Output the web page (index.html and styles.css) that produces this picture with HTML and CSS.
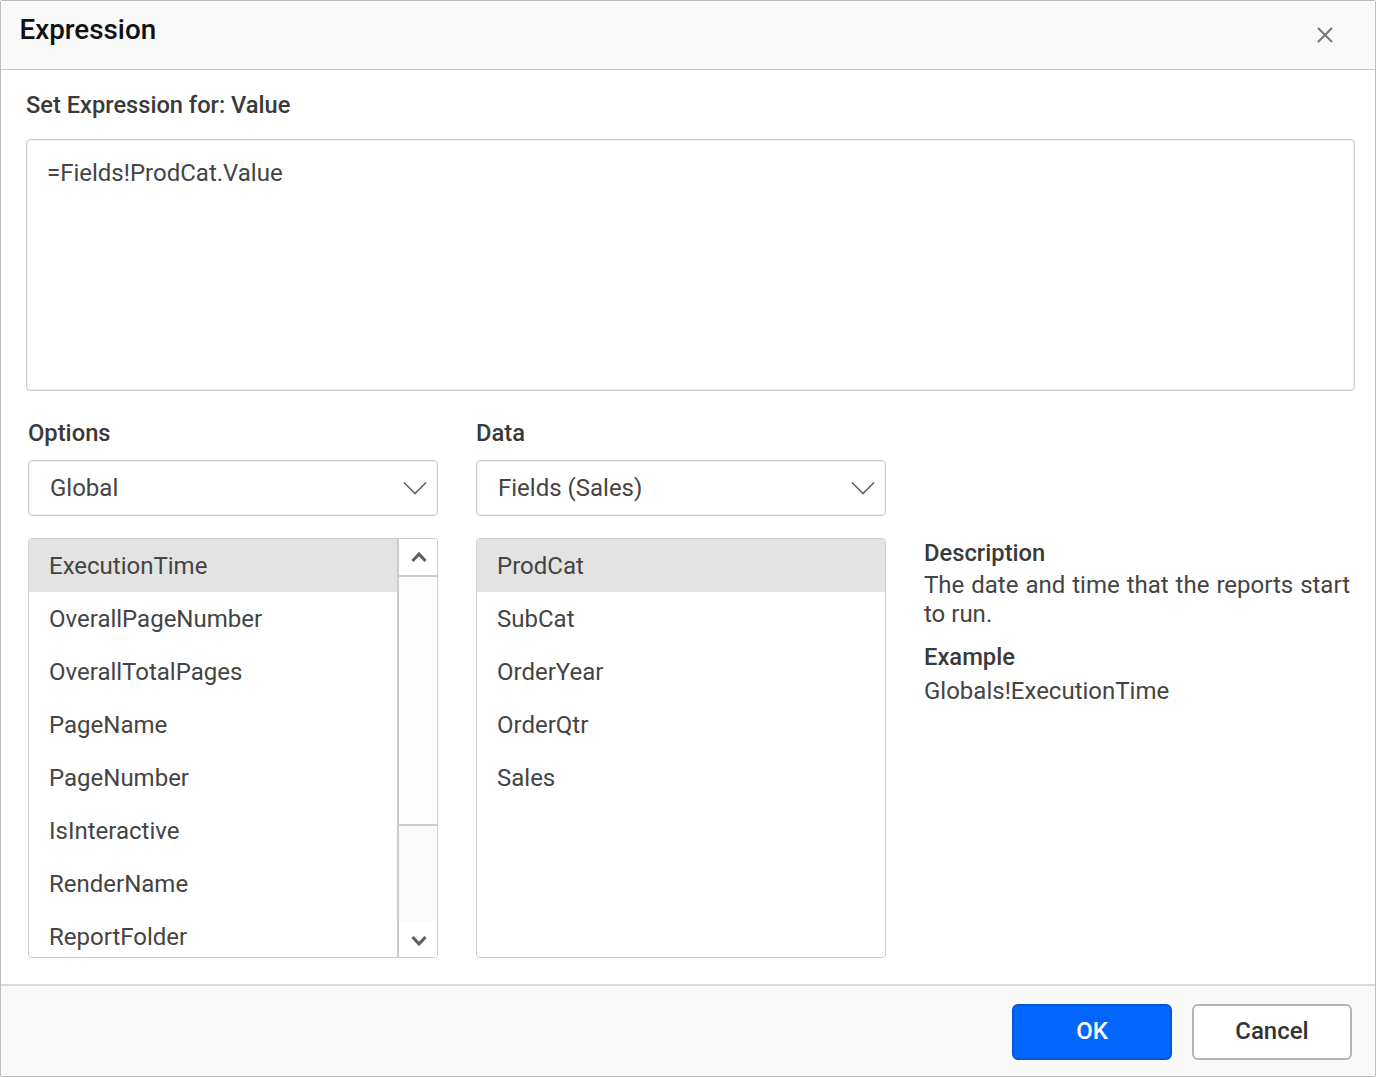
FILE: index.html
```html
<!DOCTYPE html>
<html lang="en">
<head>
<meta charset="utf-8">
<title>Expression</title>
<link rel="stylesheet" href="styles.css">
</head>
<body>
<div class="dialog">
  <header class="head">
    <h1 class="title">Expression</h1>
    <button class="close" aria-label="Close">
      <svg viewBox="0 0 16 16" width="16" height="16"><path d="M1 1L15 15M15 1L1 15" fill="none" stroke="#757575" stroke-width="2"/></svg>
    </button>
  </header>
  <main class="body">
    <div class="set-label">Set Expression for: Value</div>
    <div class="editor">=Fields!ProdCat.Value</div>
    <div class="columns">
      <section class="col">
        <div class="col-label">Options</div>
        <div class="select"><span>Global</span>
          <svg class="caret" viewBox="0 0 24 14" width="24" height="14"><path d="M1 1.5L12 12.5L23 1.5" fill="none" stroke="#666" stroke-width="1.7"/></svg>
        </div>
        <div class="list">
          <div class="items">
            <div class="item sel">ExecutionTime</div>
            <div class="item">OverallPageNumber</div>
            <div class="item">OverallTotalPages</div>
            <div class="item">PageName</div>
            <div class="item">PageNumber</div>
            <div class="item">IsInteractive</div>
            <div class="item">RenderName</div>
            <div class="item">ReportFolder</div>
          </div>
          <div class="scrollbar">
            <div class="sb-btn up"><svg viewBox="0 0 16 12" width="16" height="12"><path d="M1.5 10L8 3L14.500 10" fill="none" stroke="#616161" stroke-width="3.200"/></svg></div>
            <div class="sb-thumb"></div>
            <div class="sb-track"></div>
            <div class="sb-btn down"><svg viewBox="0 0 16 12" width="16" height="12"><path d="M1.5 2L8 9L14.500 2" fill="none" stroke="#616161" stroke-width="3.200"/></svg></div>
          </div>
        </div>
      </section>
      <section class="col">
        <div class="col-label">Data</div>
        <div class="select"><span>Fields (Sales)</span>
          <svg class="caret" viewBox="0 0 24 14" width="24" height="14"><path d="M1 1.5L12 12.5L23 1.5" fill="none" stroke="#666" stroke-width="1.7"/></svg>
        </div>
        <div class="list">
          <div class="items">
            <div class="item sel">ProdCat</div>
            <div class="item">SubCat</div>
            <div class="item">OrderYear</div>
            <div class="item">OrderQtr</div>
            <div class="item">Sales</div>
          </div>
        </div>
      </section>
      <section class="info">
        <div class="info-head">Description</div>
        <p class="info-text justified">The date and time that the reports start to run.</p>
        <div class="info-head second">Example</div>
        <p class="info-text example">Globals!ExecutionTime</p>
      </section>
    </div>
  </main>
  <footer class="foot">
    <button class="btn ok">OK</button>
    <button class="btn cancel">Cancel</button>
  </footer>
</div>
</body>
</html>
```
FILE: styles.css
```css
* { box-sizing: border-box; }
html, body { margin: 0; padding: 0; background: #fff; }
body { font-family: Roboto, "Liberation Sans", sans-serif; color: #333; }
.dialog {
  width: 1376px; height: 1077px;
  border: 1px solid #bdbdbd; border-radius: 2px;
  display: flex; flex-direction: column; background: #fff;
}
.head {
  height: 69px; flex: none;
  background: #f9f9f9; border-bottom: 1px solid #c6c6c6;
  display: flex; justify-content: space-between; align-items: flex-start;
  padding: 11px 42px 0 18.500px;
}
.title { margin: 0; font-size: 27.800px; font-weight: 500; line-height: 36px; color: #111; }
.close { border: 0; background: none; padding: 0; margin-top: 15px; width: 16px; height: 16px; display: block; }
.close svg { display: block; }
.body { flex: 1; padding: 20px 20px 0 25px; min-height: 0; }
.set-label { font-size: 23.650px; font-weight: 500; line-height: 30px; color: #3a3a3a; }
.editor {
  margin-top: 19px; width: 1329px; height: 252px;
  border: 1px solid #cccccc; border-radius: 4px; box-shadow: inset 0 0 0 1px #f0f0f0;
  padding: 18px 20px; font-size: 24px; line-height: 30px; color: #444;
}
.columns { display: flex; gap: 38px; margin-top: 27px; padding-left: 2px; }
.col { width: 410px; flex: none; }
.col-label { font-size: 23.750px; font-weight: 500; line-height: 30px; color: #3a3a3a; }
.select {
  margin-top: 12px; height: 56px; border: 1px solid #cccccc; border-radius: 4px; box-shadow: inset 0 0 0 1px #f0f0f0;
  display: flex; justify-content: space-between; align-items: center;
  padding: 0 10px 0 21px; font-size: 24px; color: #444;
}
.caret { display: block; }
.list {
  margin-top: 22px; height: 420px; border: 1px solid #cccccc; border-radius: 4px;
  display: flex; overflow: hidden;
}
.items { flex: 1; min-width: 0; overflow: hidden; }
.item { height: 53px; line-height: 55px; padding-left: 20px; font-size: 24px; color: #444; white-space: nowrap; }
.item.sel { background: #e3e3e3; }
.scrollbar { width: 40px; flex: none; border-left: 2px solid #cccccc; display: flex; flex-direction: column; background: #fff; }
.sb-btn { height: 36px; flex: none; display: flex; align-items: center; justify-content: center; padding-left: 1px; }
.sb-btn.up { height: 38px; border-bottom: 2px solid #cccccc; }
.sb-thumb { height: 249px; flex: none; background: #fdfdfd; border-bottom: 2px solid #cccccc; }
.sb-track { flex: 1; background: #fafafa; }
.sb-btn.down { background: #fff; padding: 4px 0 0 2px; }
.info { flex: 1; padding-top: 120px; min-width: 0; }
.info-head { font-size: 23.750px; font-weight: 500; line-height: 30px; color: #3a3a3a; }
.info-head.second { margin-top: 13px; }
.info-text { margin: 0; font-size: 24px; line-height: 29px; color: #444; padding-top: 3px; width: 426px; }
.info-text.justified { text-align: justify; }
.info-text.example { padding-top: 5px; }
.foot {
  height: 92px; flex: none; background: #f9f9f9; border-top: 2px solid #dcdcdc;
  display: flex; justify-content: flex-end; align-items: flex-start; gap: 20px; padding: 18px 23px 0 0;
}
.btn { width: 160px; height: 56px; border-radius: 6px; font: 500 24px Roboto, sans-serif; padding: 0 0 2px; }
.ok { background: #0266ff; border: 2px solid #0256d6; color: #fff; }
.cancel { background: #fff; border: 2px solid #b3b3b3; color: #333; }
```
